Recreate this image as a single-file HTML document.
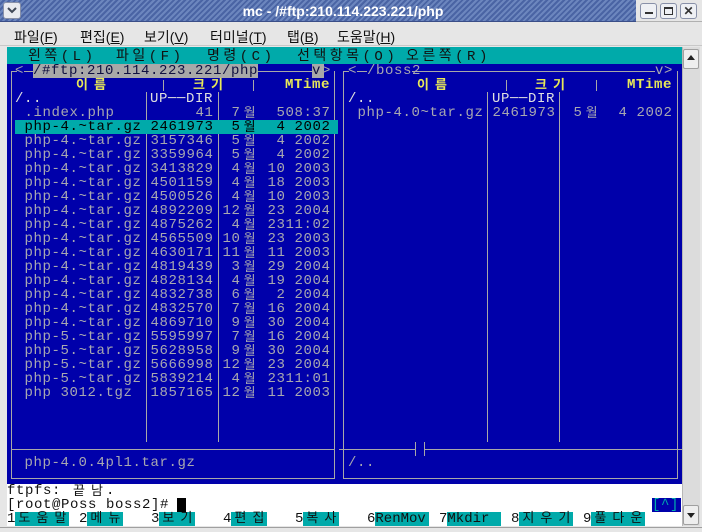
<!DOCTYPE html>
<html><head><meta charset="utf-8"><style>
*{margin:0;padding:0;box-sizing:border-box}
body{width:702px;height:532px;background:#e6e6e6;position:relative;overflow:hidden;font-family:"Liberation Sans","Noto Sans CJK KR",sans-serif}
.a{position:absolute}
.t{position:absolute;font:14px "Liberation Mono","Noto Sans CJK KR",monospace;letter-spacing:0.6px;white-space:pre;line-height:14px;color:#a8a8b0;height:14px}
.w{display:inline-block;width:18px;letter-spacing:0;font-size:13px;line-height:14px;height:14px;vertical-align:top;text-align:center;position:relative;top:1px}
.y{color:#e8e858;font-weight:bold}
.wh{color:#e0e0e0}
.h{background:#a8a8a8}
.v{position:absolute;width:1px;background:#a8a8a8}
.hl{position:absolute;height:1px;background:#a8a8a8}
.mb span{position:absolute;top:27px;font-size:14px;color:#111}
.mb u{text-decoration:underline}
.tm span{position:absolute;top:50px;font:14px "Liberation Mono","Noto Sans CJK KR",monospace;color:#111;letter-spacing:3.5px;line-height:14px}
.fk{position:absolute;top:512px;height:14px;font:14px "Liberation Mono","Noto Sans CJK KR",monospace;line-height:14px;white-space:pre;color:#111}
.fk b{font-weight:normal;background:#00aaaa;display:inline-block;height:14px;vertical-align:top}
.fk b .w{top:0}
</style></head><body>
<!-- title bar -->
<div class="a" style="left:0;top:0;width:636px;height:22px;background:repeating-linear-gradient(135deg,#6c86be 0 2px,#4a64a4 2px 4px);border-bottom:1px solid #3a4e88"></div>
<div class="a" style="left:3px;top:2px;width:18px;height:17px;background:#e8eaf0;border:1px solid #8890a8;border-radius:3px"></div>
<svg class="a" style="left:6px;top:5px" width="12" height="10"><path d="M2 3 L6 7 L10 3" stroke="#404858" stroke-width="2" fill="none"/></svg>
<div class="a" style="left:0;top:3px;width:636px;text-align:center;color:#fff;font-weight:bold;font-size:14px;padding-left:50px">mc - /#ftp:210.114.223.221/php</div>
<div class="a" style="left:636px;top:0;width:66px;height:22px;background:#e6e6e6;border-bottom:1px solid #b0b0b0"></div>
<div class="a" style="left:640px;top:3px;width:17px;height:16px;border:1px solid #8890a8;border-radius:3px;background:#eef0f4"></div>
<div class="a" style="left:645px;top:12px;width:8px;height:2px;background:#333"></div>
<div class="a" style="left:660px;top:3px;width:17px;height:16px;border:1px solid #8890a8;border-radius:3px;background:#eef0f4"></div>
<div class="a" style="left:664px;top:7px;width:9px;height:8px;border:1px solid #333;border-top-width:2px"></div>
<div class="a" style="left:680px;top:3px;width:17px;height:16px;border:1px solid #8890a8;border-radius:3px;background:#eef0f4;font-size:12px;font-weight:bold;text-align:center;line-height:14px;color:#333">✕</div>
<!-- menubar -->
<div class="mb">
<span style="left:14px">파일(<u>F</u>)</span>
<span style="left:80px">편집(<u>E</u>)</span>
<span style="left:144px">보기(<u>V</u>)</span>
<span style="left:210px">터미널(<u>T</u>)</span>
<span style="left:287px">탭(<u>B</u>)</span>
<span style="left:337px">도움말(<u>H</u>)</span>
</div>
<div class="a" style="left:0;top:45px;width:702px;height:1px;background:#c8c8c8"></div>
<!-- terminal -->
<div class="a" style="left:7px;top:47px;width:675px;height:437px;background:#0000aa"></div>
<div class="a" style="left:7px;top:47px;width:675px;height:17px;background:#00aaaa"></div>
<div class="a" style="left:7px;top:484px;width:675px;height:42px;background:#fff"></div>
<div class="tm">
<span style="left:28px">왼쪽(L)</span>
<span style="left:116px">파일(F)</span>
<span style="left:207px">명령(C)</span>
<span style="left:297px">선택항목(O)</span>
<span style="left:406px">오른쪽(R)</span>
</div>
<!-- scrollbar -->
<div class="a" style="left:682px;top:47px;width:18px;height:479px;background:#dcdcdc;border-left:1px solid #b8b8b8"></div>
<div class="a" style="left:683px;top:49px;width:16px;height:20px;background:#eeeeee;border:1px solid #a0a0a0;border-radius:2px"></div>
<svg class="a" style="left:686px;top:53px" width="10" height="10"><path d="M1 7 L5 2 L9 7Z" fill="#222"/></svg>
<div class="a" style="left:683px;top:505px;width:16px;height:20px;background:#eeeeee;border:1px solid #a0a0a0;border-radius:2px"></div>
<svg class="a" style="left:686px;top:510px" width="10" height="10"><path d="M1 3 L5 8 L9 3Z" fill="#222"/></svg>
<div class="a" style="left:0;top:527px;width:702px;height:5px;background:#e6e6e6;border-top:1px solid #a0a0a0"></div>

<!-- panel borders -->
<div class="hl" style="left:11px;top:71px;width:6px"></div>
<div class="hl" style="left:24px;top:71px;width:9px"></div>
<div class="hl" style="left:258px;top:71px;width:54px"></div>
<div class="v" style="left:11px;top:71px;height:408px"></div>
<div class="v" style="left:334px;top:71px;height:408px"></div>
<div class="hl" style="left:11px;top:449px;width:324px"></div>
<div class="hl" style="left:11px;top:478px;width:324px"></div>
<div class="v" style="left:146px;top:92px;height:350px"></div>
<div class="v" style="left:218px;top:92px;height:350px"></div>
<div class="v" style="left:163px;top:80px;height:11px"></div>
<div class="v" style="left:253px;top:80px;height:11px"></div>

<div class="hl" style="left:343px;top:71px;width:6px"></div>
<div class="hl" style="left:357px;top:71px;width:10px"></div>
<div class="hl" style="left:412px;top:71px;width:243px"></div>
<div class="v" style="left:343px;top:71px;height:408px"></div>
<div class="v" style="left:677px;top:71px;height:408px"></div>
<div class="hl" style="left:339px;top:449px;width:76px"></div>
<div class="hl" style="left:424px;top:449px;width:258px"></div>
<div class="v" style="left:415px;top:442px;height:14px"></div>
<div class="v" style="left:424px;top:442px;height:14px"></div>
<div class="hl" style="left:343px;top:478px;width:335px"></div>
<div class="v" style="left:487px;top:92px;height:350px"></div>
<div class="v" style="left:559px;top:92px;height:350px"></div>
<div class="v" style="left:506px;top:80px;height:11px"></div>
<div class="v" style="left:596px;top:80px;height:11px"></div>

<!-- path row -->
<div class="t" style="left:15px;top:64px">&lt;</div>
<div class="t h" style="left:33px;top:64px;width:225px;color:#101040">/#ftp:210.114.223.221/php</div>
<div class="t h" style="left:312px;top:64px;width:12px;color:#101040">v</div>
<div class="t" style="left:322px;top:64px">&gt;</div>
<div class="t" style="left:348px;top:64px">&lt;</div>
<div class="t" style="left:367px;top:64px">/boss2</div>
<div class="t" style="left:655px;top:64px">v&gt;</div>
<!-- headers -->
<div class="t y" style="left:73px;top:78px"><span class="w">이</span><span class="w">름</span></div>
<div class="t y" style="left:190px;top:78px"><span class="w">크</span><span class="w">기</span></div>
<div class="t y" style="left:285px;top:78px">MTime</div>
<div class="t y" style="left:414px;top:78px"><span class="w">이</span><span class="w">름</span></div>
<div class="t y" style="left:532px;top:78px"><span class="w">크</span><span class="w">기</span></div>
<div class="t y" style="left:627px;top:78px">MTime</div>
<div class="t wh" style="left:15px;top:92px">/..</div>
<div class="t wh" style="left:150px;top:92px">UP──DIR</div>
<div class="t wh" style="left:348px;top:92px">/..</div>
<div class="t wh" style="left:492px;top:92px">UP──DIR</div>

<!-- left file list -->
<div class="a" style="left:15px;top:120px;width:323px;height:14px;background:#00aaaa"></div>
<div class="t" style="left:6.5px;top:106px">  .index.php         41  7<span class="w">월</span>  508:37</div>
<div class="t" style="left:6.5px;top:120px;color:#000">  php-4.~tar.gz 2461973  5<span class="w">월</span>  4 2002</div>
<div class="t" style="left:6.5px;top:134px">  php-4.~tar.gz 3157346  5<span class="w">월</span>  4 2002</div>
<div class="t" style="left:6.5px;top:148px">  php-4.~tar.gz 3359964  5<span class="w">월</span>  4 2002</div>
<div class="t" style="left:6.5px;top:162px">  php-4.~tar.gz 3413829  4<span class="w">월</span> 10 2003</div>
<div class="t" style="left:6.5px;top:176px">  php-4.~tar.gz 4501159  4<span class="w">월</span> 18 2003</div>
<div class="t" style="left:6.5px;top:190px">  php-4.~tar.gz 4500526  4<span class="w">월</span> 10 2003</div>
<div class="t" style="left:6.5px;top:204px">  php-4.~tar.gz 4892209 12<span class="w">월</span> 23 2004</div>
<div class="t" style="left:6.5px;top:218px">  php-4.~tar.gz 4875262  4<span class="w">월</span> 2311:02</div>
<div class="t" style="left:6.5px;top:232px">  php-4.~tar.gz 4565509 10<span class="w">월</span> 23 2003</div>
<div class="t" style="left:6.5px;top:246px">  php-4.~tar.gz 4630171 11<span class="w">월</span> 11 2003</div>
<div class="t" style="left:6.5px;top:260px">  php-4.~tar.gz 4819439  3<span class="w">월</span> 29 2004</div>
<div class="t" style="left:6.5px;top:274px">  php-4.~tar.gz 4828134  4<span class="w">월</span> 19 2004</div>
<div class="t" style="left:6.5px;top:288px">  php-4.~tar.gz 4832738  6<span class="w">월</span>  2 2004</div>
<div class="t" style="left:6.5px;top:302px">  php-4.~tar.gz 4832570  7<span class="w">월</span> 16 2004</div>
<div class="t" style="left:6.5px;top:316px">  php-4.~tar.gz 4869710  9<span class="w">월</span> 30 2004</div>
<div class="t" style="left:6.5px;top:330px">  php-5.~tar.gz 5595997  7<span class="w">월</span> 16 2004</div>
<div class="t" style="left:6.5px;top:344px">  php-5.~tar.gz 5628958  9<span class="w">월</span> 30 2004</div>
<div class="t" style="left:6.5px;top:358px">  php-5.~tar.gz 5666998 12<span class="w">월</span> 23 2004</div>
<div class="t" style="left:6.5px;top:372px">  php-5.~tar.gz 5839214  4<span class="w">월</span> 2311:01</div>
<div class="t" style="left:6.5px;top:386px">  php 3012.tgz  1857165 12<span class="w">월</span> 11 2003</div>
<div class="t" style="left:24.5px;top:456px">php-4.0.4pl1.tar.gz</div>
<!-- right file list -->
<div class="t" style="left:339.5px;top:106px">  php-4.0~tar.gz 2461973  5<span class="w">월</span>  4 2002</div>
<div class="t" style="left:348px;top:456px">/..</div>

<!-- bottom -->
<div class="t" style="left:7px;top:484px;color:#111">ftpfs: <span class="w">끝</span><span class="w">남</span>.</div>
<div class="t" style="left:7px;top:498px;color:#111">[root@Poss boss2]# </div>
<div class="a" style="left:177px;top:498px;width:9px;height:14px;background:#000"></div>
<div class="t" style="left:652px;top:498px;width:29px;background:#0000aa;color:#00aaaa">[^]</div>

<div class="fk" style="left:7px">1<b style="width:54px"><span class="w">도</span><span class="w">움</span><span class="w">말</span></b></div>
<div class="fk" style="left:79px">2<b style="width:36px"><span class="w">메</span><span class="w">뉴</span></b></div>
<div class="fk" style="left:151px">3<b style="width:36px"><span class="w">보</span><span class="w">기</span></b></div>
<div class="fk" style="left:223px">4<b style="width:36px"><span class="w">편</span><span class="w">집</span></b></div>
<div class="fk" style="left:295px">5<b style="width:36px"><span class="w">복</span><span class="w">사</span></b></div>
<div class="fk" style="left:367px">6<b style="width:54px">RenMov</b></div>
<div class="fk" style="left:439px">7<b style="width:54px">Mkdir </b></div>
<div class="fk" style="left:511px">8<b style="width:54px"><span class="w">지</span><span class="w">우</span><span class="w">기</span></b></div>
<div class="fk" style="left:583px">9<b style="width:54px"><span class="w">풀</span><span class="w">다</span><span class="w">운</span></b></div>
</body></html>
